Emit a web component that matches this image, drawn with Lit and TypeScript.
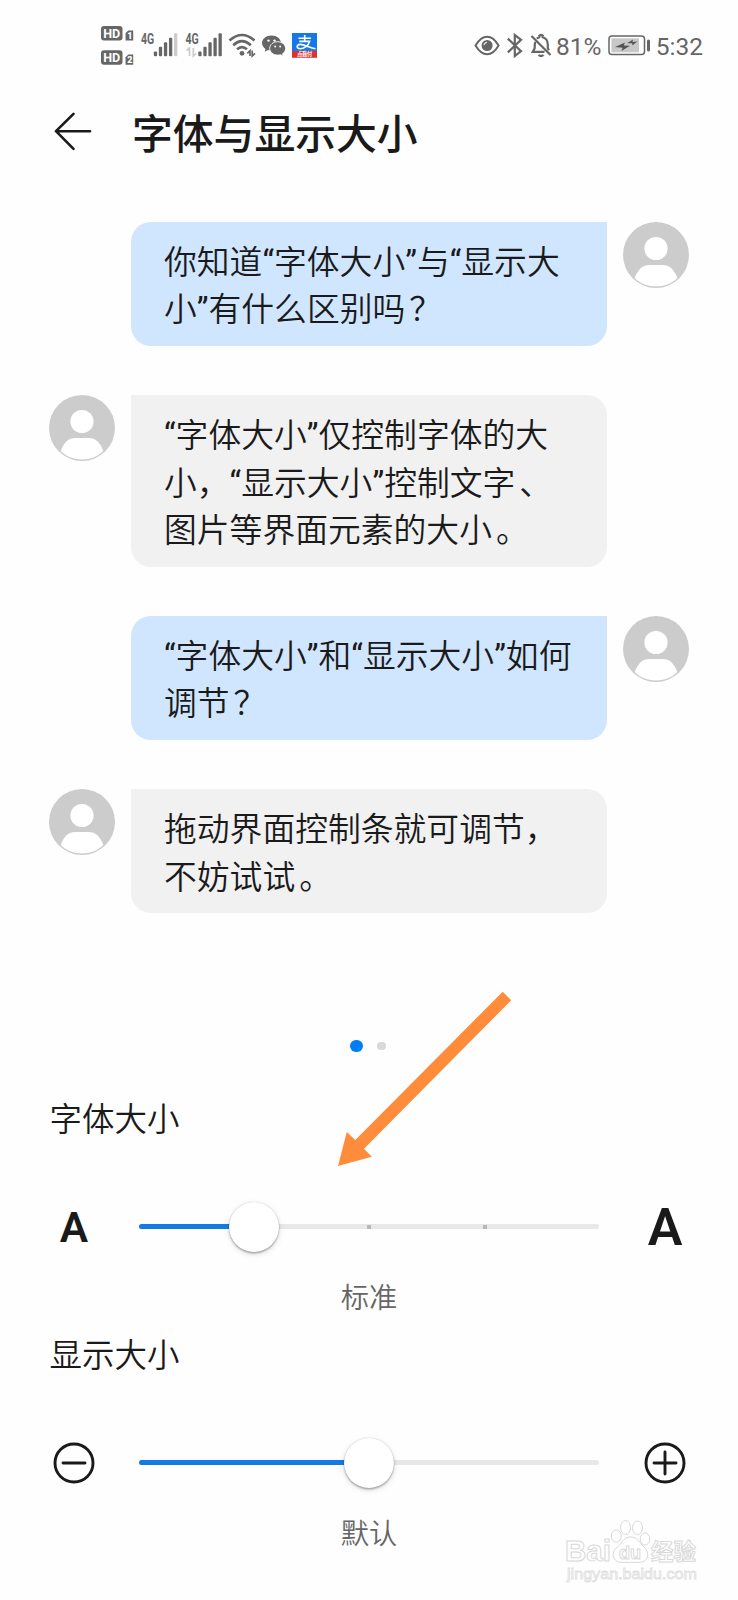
import { LitElement, html, svg, css } from "lit";
import { customElement, property } from "lit/decorators.js";

@customElement("status-bar")
class StatusBar extends LitElement {
  static styles = css`
    :host { display: flex; height: 60px; padding-left: 100px; padding-right: 35px; color: #666; font-family: Roboto, sans-serif; }
    svg { display: block; flex: none; height: 60px; }
    text { font-family: Roboto, "Noto Sans CJK SC", sans-serif; }
    .left, .right { display: flex; align-items: center; }
    .right { margin-left: auto; }
    .label { font-size: 24.5px; line-height: 60px; white-space: nowrap; padding-top: 3px; }
    .percent { width: 50.5px; }
    .time { width: 48.5px; text-align: right; }
  `;

  private hd(y: number, n: string) {
    return svg`
      <rect x="101" y=${y} width="21.5" height="14.5" rx="3" fill="#666"/>
      <text x="103.2" y=${y + 11.7} font-size="12.5" font-weight="700" fill="#fff" textLength="17" lengthAdjust="spacingAndGlyphs">HD</text>
      <path d=${`M128.3 ${y + 4.4}H133.2V${y + 14.6}H125.6V${y + 7.1}Z`} fill="#666"/>
      <text x="127.2" y=${y + 13} font-size="9" font-weight="900" fill="#fff">${n}</text>`;
  }

  private bars(x: number, lastDim: boolean) {
    return [51.6, 46.8, 42.3, 37.7, 33.2].map(
      (top, i) => svg`<rect x=${x + i * 5.05} y=${top} width="3.3" height=${56.2 - top} rx="1" fill=${lastDim && i === 4 ? "#ccc" : "#666"}/>`
    );
  }

  render() {
    return html`
      <div class="left">
        <svg width="38" viewBox="100 15 38 60">${this.hd(26, "1")}${this.hd(50.2, "2")}</svg>
        <svg width="44" viewBox="138 15 44 60">
          <text x="141" y="44.2" font-size="14" font-weight="700" fill="#666" textLength="13.2" lengthAdjust="spacingAndGlyphs">4G</text>
          ${this.bars(153.8, true)}
        </svg>
        <svg width="44" viewBox="182 15 44 60">
          <text x="185.5" y="44.2" font-size="14" font-weight="700" fill="#666" textLength="13.2" lengthAdjust="spacingAndGlyphs">4G</text>
          <path d="M186.5 50.5L189.5 48V56M193.3 48V56L196 53.5" fill="none" stroke="#ccc" stroke-width="1.7"/>
          ${this.bars(198.3, false)}
        </svg>
        <svg width="34" viewBox="226 15 34 60" fill="none" stroke="#666" stroke-width="2.6">
          <path d="M229.5 40.5Q242 29.5 254.5 40.5M233.2 45.2Q242 37.2 250.8 45.2M237 49.3Q242 44.8 247 49.3"/>
          <circle cx="242" cy="53.3" r="2.4" fill="#666" stroke="none"/>
          <path d="M247.3 53.3L250 50.7V56M252.2 50.5V56L255 53.3" stroke-width="1.7"/>
        </svg>
        <svg width="30" viewBox="260 15 30 60" fill="#666">
          <path d="M271.5 35.4C266.2 35.4 262 38.8 262 43C262 45.4 263.4 47.5 265.5 48.9L264.7 51.8L268 50.1C269.2 50.4 270.3 50.6 271.5 50.6C276.8 50.6 281 47.2 281 43C281 38.8 276.8 35.4 271.5 35.4Z"/>
          <path d="M277.7 41.7C273.2 41.7 269.7 44.7 269.7 48.4C269.7 52.1 273.2 55.1 277.7 55.1C278.7 55.1 279.6 55 280.5 54.7L283.3 56.2L282.6 53.7C284.4 52.5 285.6 50.6 285.6 48.4C285.6 44.7 282.1 41.7 277.7 41.7Z" stroke="#fff" stroke-width="0.9"/>
          <g fill="#fff"><circle cx="268.5" cy="40.6" r="1.2"/><circle cx="274.5" cy="40.6" r="1.2"/><circle cx="275.2" cy="46.6" r="1"/><circle cx="280.2" cy="46.6" r="1"/></g>
        </svg>
        <svg width="30" viewBox="290 15 30 60">
          <rect x="292" y="33" width="25" height="18.5" fill="#1677e8"/>
          <rect x="292" y="51" width="25" height="6.8" fill="#dc3230"/>
          <path d="M298.5 38.2H311M304.7 35V41.4M299.3 41.4H309.6C308.6 45.4 304 48.8 300.2 48.8C296.2 48.8 296.2 44.4 300 44.4C304.4 44.4 309 47.4 315.5 48.8" fill="none" stroke="#fff" stroke-width="1.6"/>
          <text x="297.2" y="56.4" font-size="5.2" font-weight="700" fill="#fff" textLength="15">点我付</text>
        </svg>
      </div>
      <div class="right">
        <svg width="30" viewBox="472 15 30 60">
          <path d="M474.5 45.5C478.5 38.8 482 36.7 486.1 36.7S493.7 38.8 497.6 45.5C493.7 52.2 490.2 54.3 486.1 54.3S478.5 52.2 474.5 45.5Z" fill="none" stroke="#666" stroke-width="2"/>
          <circle cx="486.1" cy="45.5" r="5.5" fill="#666"/><path d="M483 45.2A3.2 3.2 0 0 1 486 42.4" fill="none" stroke="#ddd" stroke-width="1.2"/>
        </svg>
        <svg width="25" viewBox="502 15 25 60" fill="none" stroke="#666" stroke-width="2.2">
          <path d="M506.8 38.6L520 51.2L513.8 56V35L520 39.8L506.8 52.4"/>
        </svg>
        <svg width="28" viewBox="527 15 28 60" fill="none" stroke="#666" stroke-width="2.2">
          <path d="M530.5 36L549.5 55M534.3 41.8C533.6 43.5 533.7 45.5 533.7 48.2L531.7 51.9H543.5M535.8 38.6C537 37.6 538 37.2 539.3 37M540.6 37C545.3 37.7 546.8 41.2 546.8 44.8V48.2L548 50.3M537.6 36.2Q540.1 33.8 542.6 36.2M537.5 55Q540 57 542.5 55"/>
        </svg>
        <span class="label percent">81%</span>
        <svg width="48" viewBox="606 15 48 60">
          <rect x="608" y="36" width="35.5" height="18.6" rx="3" fill="#fff" stroke="#666" stroke-width="1.5"/>
          <rect x="610.4" y="38.3" width="27.6" height="14" fill="#c8c8c8"/>
          <path d="M614 47L624 42.5L622.8 45.6L629 45.8L620.5 51L621.6 47.8ZM626 43.3L632 39.6L631.5 42L636.4 41.5L631.3 45.4L631.3 43.2Z" fill="#555"/>
          <rect x="646" y="39.5" width="3" height="12" rx="1.5" fill="#666"/>
        </svg>
        <span class="label time">5:32</span>
      </div>`;
  }
}

@customElement("chat-message")
class ChatMessage extends LitElement {
  @property({ type: Boolean, reflect: true }) mine = false;
  @property({ attribute: false }) lines: string[] = [];
  static styles = css`
    :host { display: flex; gap: 16px; align-items: flex-start; }
    :host([mine]) { flex-direction: row-reverse; }
    .avatar { width: 66px; height: 66px; display: block; flex: none; }
    .bubble { box-sizing: border-box; width: 476px; padding: 18px 0 11.3px 33px; border-radius: 0 20px 20px 20px; background: #f1f1f1; color: #1a1a1a; font-size: 32.8px; font-weight: 350; line-height: 47.4px; white-space: nowrap; }
    :host([mine]) .bubble { background: #d0e6ff; border-radius: 20px 0 20px 20px; }
    .stop { padding-left: 4px; }
    .quote { font-weight: 400; }
  `;
  private line(text: string) {
    const parts = text.split(/([“”？。、])/);
    return html`<div>${parts.map((p) =>
      p === "“" || p === "”"
        ? html`<span class="quote">${p}</span>`
        : p !== "" && "？。、".includes(p)
          ? html`<span class="stop">${p}</span>`
          : p
    )}</div>`;
  }
  render() {
    return html`
      <svg class="avatar" viewBox="0 0 66 66">
        <circle cx="33" cy="33" r="33" fill="#ccc"/>
        <circle cx="33" cy="26.5" r="11.6" fill="#fff"/>
        <path d="M11.7 56C14.5 47.5 20 43 26 43H40C46 43 51.5 47.5 54.3 56C48.5 61.8 41 64.5 33 64.5S17.5 61.8 11.7 56Z" fill="#fff"/>
      </svg>
      <div class="bubble">${this.lines.map((l) => this.line(l))}</div>`;
  }
}

@customElement("setting-slider")
class SettingSlider extends LitElement {
  @property() heading = "";
  @property() caption = "";
  @property() kind = "font";
  @property({ type: Number }) value = 0;
  static styles = css`
    :host { display: block; height: 236px; color: #1a1a1a; }
    .heading { font-size: 32.5px; font-weight: 350; line-height: 48px; padding-left: 49.5px; }
    .row { display: grid; grid-template-columns: 50px 459.5px 50px; justify-content: space-between; align-items: center; height: 60px; margin: 52.3px 48.5px 0 48.5px; }
    .end { display: flex; justify-content: center; align-items: center; height: 60px; }
    .letter { font: 600 42.5px/60px Roboto, sans-serif; }
    .letter span { padding-top: 2px; padding-left: 1px; }
    .big { font-size: 52px; }
    .track { display: grid; align-items: center; height: 60px; }
    .track > * { grid-area: 1 / 1; }
    .rail { height: 4.5px; border-radius: 3px; background: #e8e8e8; }
    .fill { height: 4.5px; border-radius: 3px; background: #147be6; }
    .ticks { display: flex; justify-content: space-evenly; }
    .tick { width: 4px; height: 4px; background: #b8b8b8; }
    .thumb { width: 50px; height: 50px; border-radius: 50%; background: #fff; box-shadow: 0 1.5px 2px rgba(0,0,0,.28), 0 2px 6px rgba(0,0,0,.13), 0 0 1px rgba(0,0,0,.22); transform: translateX(-50%); }
    .caption { text-align: center; font-size: 28.3px; font-weight: 350; line-height: 40px; margin-top: 22px; color: #666; }
  `;
  private circleIcon(plus: boolean) {
    return html`<svg width="42" height="42" viewBox="0 0 42 42" fill="none" stroke="#1a1a1a" stroke-width="2.9" stroke-linecap="round">
      <circle cx="21" cy="21" r="19"/><path d=${plus ? "M10 21H32M21 10V32" : "M10 21H32"}/></svg>`;
  }
  render() {
    const font = this.kind === "font";
    return html`
      <div class="heading">${this.heading}</div>
      <div class="row">
        <div class="end letter">${font ? html`<span>A</span>` : this.circleIcon(false)}</div>
        <div class="track">
          <div class="rail"></div>
          ${font ? html`<div class="ticks"><i class="tick"></i><i class="tick"></i><i class="tick"></i></div>` : ""}
          <div class="fill" style="width:${this.value}%"></div>
          <div class="thumb" style="margin-left:${this.value}%"></div>
        </div>
        <div class="end letter big">${font ? html`<span>A</span>` : this.circleIcon(true)}</div>
      </div>
      <div class="caption">${this.caption}</div>`;
  }
}

@customElement("app-root")
class AppRoot extends LitElement {
  static styles = css`
    :host { display: block; position: relative; width: 738px; height: 1600px; overflow: hidden; background: #fefefe; font-family: Roboto, "Noto Sans CJK SC", sans-serif; }
    .page { padding-top: 15px; }
    .header { display: flex; align-items: center; height: 60px; margin-top: 27px; padding-left: 53px; gap: 39px; }
    .title { margin: 0; padding-top: 6px; font-size: 40.8px; line-height: 60px; font-weight: 500; color: #1a1a1a; }
    .back { display: block; }
    .chat { display: flex; flex-direction: column; gap: 49.3px; padding: 59.7px 49px 0; }
    .dots { display: flex; align-items: center; justify-content: center; gap: 14px; height: 14px; margin-top: 125.7px; padding-right: 2px; }
    .dot { width: 8.5px; height: 8.5px; border-radius: 50%; background: #d8d8d8; }
    .dot.active { width: 12.6px; height: 12.6px; background: #007df2; }
    .settings { padding-top: 43.2px; }
    .arrow { position: absolute; left: 330px; top: 985px; }
    .watermark { position: absolute; left: 560px; top: 1515px; }
    .watermark text { font-family: "Liberation Sans", "Noto Sans CJK SC", sans-serif; }
  `;
  render() {
    return html`
      <div class="page">
        <status-bar></status-bar>
        <div class="header">
          <svg class="back" width="40" height="40" viewBox="0 0 40 40" fill="none" stroke="#1a1a1a" stroke-width="2.6" stroke-linecap="round" stroke-linejoin="round"><path d="M20.5 1.8L3 19.2L20.5 36.8M3 19.2H37"/></svg>
          <h1 class="title">字体与显示大小</h1>
        </div>
        <div class="chat">
          <chat-message mine .lines=${["你知道“字体大小”与“显示大", "小”有什么区别吗？"]}></chat-message>
          <chat-message .lines=${["“字体大小”仅控制字体的大", "小，“显示大小”控制文字、", "图片等界面元素的大小。"]}></chat-message>
          <chat-message mine .lines=${["“字体大小”和“显示大小”如何", "调节？"]}></chat-message>
          <chat-message .lines=${["拖动界面控制条就可调节，", "不妨试试。"]}></chat-message>
        </div>
        <div class="dots"><i class="dot active"></i><i class="dot"></i></div>
        <div class="settings">
          <setting-slider heading="字体大小" caption="标准" kind="font" value="25"></setting-slider>
          <setting-slider heading="显示大小" caption="默认" kind="display" value="50"></setting-slider>
        </div>
      </div>
      <svg class="arrow" width="190" height="190" viewBox="330 985 190 190"><path d="M502.7 991.7L511.2 1000.3L364 1148.7L371.8 1156.7L338 1166L346.8 1132L355.3 1140Z" fill="#ff8c3b"/></svg>
      <svg class="watermark" width="150" height="75" viewBox="560 1515 150 75" fill="#fff" stroke="#d9d9d9" stroke-width="1">
        <text x="565" y="1561" font-size="29" font-weight="700" textLength="46" lengthAdjust="spacingAndGlyphs">Bai</text>
        <ellipse cx="616.3" cy="1536" rx="5" ry="6"/><ellipse cx="625.6" cy="1527.5" rx="5" ry="7"/><ellipse cx="637.5" cy="1527.8" rx="5" ry="6.8"/><ellipse cx="645" cy="1539" rx="4.8" ry="6"/>
        <path d="M630.5 1537C623 1537 622.5 1543 617.5 1547C610 1553 613 1562 621 1562.3C627 1562.5 634 1562.5 640 1562.3C648.5 1562 650 1553 644.5 1547.5C639.5 1543 638 1537 630.5 1537Z"/>
        <text x="619" y="1558.5" font-size="19" font-weight="700" textLength="22" lengthAdjust="spacingAndGlyphs">du</text>
        <text x="651" y="1560" font-size="22.5" font-weight="700">经验</text>
        <text x="567" y="1579" font-size="15" stroke="#dedede" stroke-width="0.8" textLength="130" lengthAdjust="spacingAndGlyphs">jingyan.baidu.com</text>
      </svg>`;
  }
}
